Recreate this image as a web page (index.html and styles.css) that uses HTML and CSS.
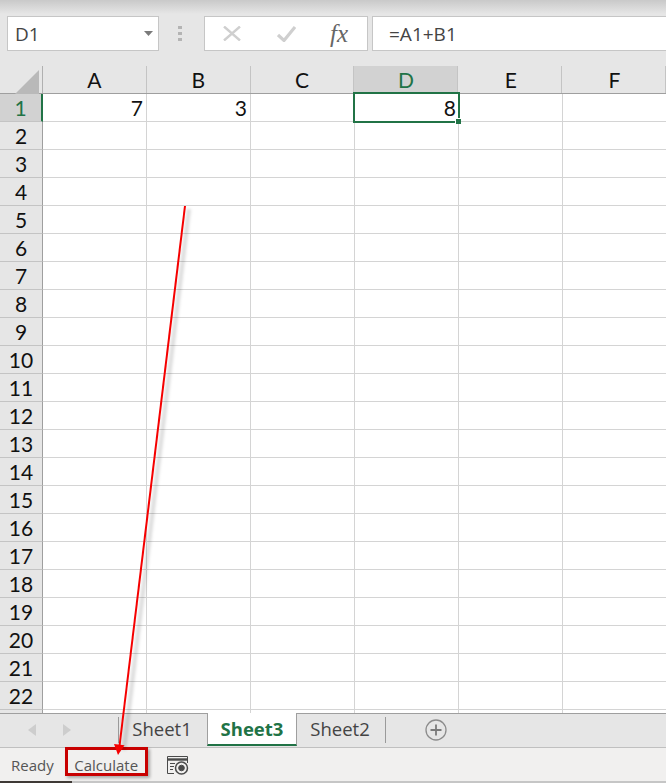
FILE: index.html
```html
<!DOCTYPE html>
<html lang="en">
<head>
    <meta charset="UTF-8">
    <title>Excel - Calculate</title>
    <link rel="stylesheet" href="styles.css">
</head>
<body>
    <div class="app">
        <div class="formula-bar">
            <div class="name-box">
                <span>D1</span>
                <svg class="name-caret" width="9" height="5" viewBox="0 0 9 5"><path d="M0 0h9L4.500 5z" fill="#7a7a7a"/></svg>
            </div>
            <div class="grip"><i></i><i></i><i></i></div>
            <div class="fx-box">
                <svg width="18" height="15" viewBox="0 0 18 15"><path d="M1 .500l16 14M17 .500l-16 14" stroke="#cfcfcf" stroke-width="2.400" fill="none"/></svg>
                <svg width="19" height="16" viewBox="0 0 19 16"><path d="M1 9l6 5.500L18 1" stroke="#cfcfcf" stroke-width="3.200" fill="none"/></svg>
                <span class="fx">fx</span>
            </div>
            <div class="formula-input">=A1+B1</div>
        </div>

        <div class="sheet">
            <div class="col-heads">
                <div class="corner"><svg width="24" height="24" viewBox="0 0 24 24"><path d="M24 0v24H0z" fill="#b9b9b9"/></svg></div>
                <div class="col-head">A</div>
                <div class="col-head">B</div>
                <div class="col-head">C</div>
                <div class="col-head active">D</div>
                <div class="col-head">E</div>
                <div class="col-head">F</div>
            </div>
            <div class="row">
                <div class="row-head active">1</div>
                <div class="cells">
                    <div class="cell">7</div>
                    <div class="cell">3</div>
                    <div class="cell"></div>
                    <div class="cell selected">8<span class="fill-handle"></span></div>
                </div>
            </div>
            <div class="row"><div class="row-head">2</div><div class="cells"></div></div>
            <div class="row"><div class="row-head">3</div><div class="cells"></div></div>
            <div class="row"><div class="row-head">4</div><div class="cells"></div></div>
            <div class="row"><div class="row-head">5</div><div class="cells"></div></div>
            <div class="row"><div class="row-head">6</div><div class="cells"></div></div>
            <div class="row"><div class="row-head">7</div><div class="cells"></div></div>
            <div class="row"><div class="row-head">8</div><div class="cells"></div></div>
            <div class="row"><div class="row-head">9</div><div class="cells"></div></div>
            <div class="row"><div class="row-head">10</div><div class="cells"></div></div>
            <div class="row"><div class="row-head">11</div><div class="cells"></div></div>
            <div class="row"><div class="row-head">12</div><div class="cells"></div></div>
            <div class="row"><div class="row-head">13</div><div class="cells"></div></div>
            <div class="row"><div class="row-head">14</div><div class="cells"></div></div>
            <div class="row"><div class="row-head">15</div><div class="cells"></div></div>
            <div class="row"><div class="row-head">16</div><div class="cells"></div></div>
            <div class="row"><div class="row-head">17</div><div class="cells"></div></div>
            <div class="row"><div class="row-head">18</div><div class="cells"></div></div>
            <div class="row"><div class="row-head">19</div><div class="cells"></div></div>
            <div class="row"><div class="row-head">20</div><div class="cells"></div></div>
            <div class="row"><div class="row-head">21</div><div class="cells"></div></div>
            <div class="row"><div class="row-head">22</div><div class="cells"></div></div>
            <div class="row row-cut"><div class="row-head"></div><div class="cells"></div></div>
        </div>

        <div class="tab-bar">
            <div class="tab-nav">
                <svg width="8" height="12" viewBox="0 0 8 12"><path d="M8 0v12L0 6z" fill="#cdcdcd"/></svg>
                <svg width="8" height="12" viewBox="0 0 8 12"><path d="M0 0v12l8-6z" fill="#cdcdcd"/></svg>
            </div>
            <div class="tab-sep"></div>
            <div class="tab">Sheet1</div>
            <div class="tab current">Sheet3</div>
            <div class="tab">Sheet2</div>
            <div class="tab-sep"></div>
            <svg class="add-sheet" width="22" height="22" viewBox="0 0 22 22">
                <circle cx="11" cy="11" r="10" stroke="#8c8c8c" stroke-width="1.300" fill="none"/>
                <path d="M11 5.500v11M5.500 11h11" stroke="#7a7a7a" stroke-width="1.800" fill="none"/>
            </svg>
        </div>

        <div class="status-bar">
            <span class="status-ready">Ready</span>
            <span class="status-calc">Calculate</span>
            <svg class="status-icon" width="23" height="20" viewBox="0 0 23 20" fill="none" stroke="#4a4a4a">
                <path d="M8 18.500H1.500v-17h20V8"/>
                <path d="M1.500 4.500h20" stroke-width="2.400"/>
                <path d="M4 8.500h5M4 11.500h4M4 14.500h3"/>
                <circle cx="15.500" cy="13" r="6" stroke-width="1.500"/>
                <circle cx="15.500" cy="13" r="2.800" fill="#4a4a4a"/>
            </svg>
        </div>
        <div class="window-edge"><div class="window-edge-dark"></div></div>

        <svg class="arrow" width="666" height="783" viewBox="0 0 666 783">
            <defs>
                <filter id="arrow-blur" x="-50%" y="-5%" width="200%" height="110%"><feGaussianBlur stdDeviation="1.500"/></filter>
            </defs>
            <path d="M189 209L124 750" stroke="#000" stroke-opacity=".14" stroke-width="4" fill="none" filter="url(#arrow-blur)"/>
            <path d="M185 206L119.500 746" stroke="#f50000" stroke-width="2" fill="none"/>
            <path d="M114 744l10.500 1.300L118 755z" fill="#f50000"/>
        </svg>
    </div>
</body>
</html>
```

FILE: styles.css
```css
* {
    box-sizing: border-box;
}
body {
    margin: 0;
    background-color: #e6e6e6;
    font-family: Lato, "Liberation Sans", sans-serif;
}
.app {
    position: relative;
    width: 666px;
    height: 783px;
    overflow: hidden;
    display: flex;
    flex-direction: column;
}

/* formula bar */
.formula-bar {
    height: 66px;
    padding: 16px 0 0 7px;
    display: flex;
    align-items: flex-start;
    background: linear-gradient(#c9c9c9, #e6e6e6 14px);
}
.name-box, .fx-box, .formula-input {
    height: 35px;
    background-color: #fff;
    border: 1px solid #c6c6c6;
    color: #444;
    font-family: "Open Sans", sans-serif;
    font-size: 19px;
    display: flex;
    align-items: center;
}
.name-box {
    width: 152px;
    padding: 0 5px 0 7px;
    justify-content: space-between;
}
.name-caret {
    margin-top: -1px;
}
.grip {
    width: 45px;
    height: 35px;
    padding-right: 3px;
    display: flex;
    flex-direction: column;
    align-items: center;
    justify-content: center;
    gap: 3px;
}
.grip i {
    width: 4px;
    height: 3px;
    background-color: #b4b4b4;
}
.fx-box {
    width: 164px;
    padding-left: 18px;
    gap: 36px;
}
.fx {
    margin-left: -2px;
    font-family: "Liberation Serif", serif;
    font-style: italic;
    font-size: 25px;
    color: #666;
}
.formula-input {
    flex: 1;
    margin-left: 4px;
    padding-left: 16px;
    border-right: none;
}

/* grid */
.sheet {
    height: 648px;
    background-color: #fff;
    overflow: hidden;
}
.col-heads {
    height: 28px;
    display: flex;
    background-color: #e6e6e6;
    border-bottom: 1px solid #9f9f9f;
}
.corner {
    width: 43px;
    padding: 4px 3px 0 16px;
    border-right: 1px solid #b0b0b0;
    display: flex;
    align-items: flex-start;
    justify-content: flex-end;
}
.corner svg {
    flex: none;
}
.col-head {
    width: 104px;
    border-right: 1px solid #c4c4c4;
    font-size: 21px;
    line-height: 28px;
    text-align: center;
    color: #111;
}
.col-head:nth-child(n+6) {
    padding-left: 2px;
}
.col-head.active {
    background-color: #d2d2d2;
    color: #217346;
}
.row {
    height: 28px;
    display: flex;
    border-bottom: 1px solid #d4d4d4;
}
.row-head {
    width: 43px;
    background-color: #e6e6e6;
    border-right: 1px solid #9f9f9f;
    border-bottom: 1px solid #c4c4c4;
    margin-bottom: -1px;
    font-size: 21px;
    line-height: 27px;
    text-align: center;
    color: #111;
}
.row-head.active {
    background-color: #d2d2d2;
    color: #217346;
    border-right: 2px solid #217346;
}
.cells {
    flex: 1;
    display: flex;
    background-image: linear-gradient(to right, transparent 103px, #d4d4d4 103px);
    background-size: 104px 100%;
}
.cell {
    position: relative;
    width: 104px;
    padding-right: 4px;
    font-size: 21px;
    line-height: 27px;
    text-align: right;
    color: #111;
}
.cell.selected {
    margin: -2px 0 -1px -2px;
    width: 107px;
    height: 31px;
    padding-right: 2px;
    border: 2px solid #217346;
    line-height: 27px;
    background-color: #fff;
}
.fill-handle {
    position: absolute;
    right: -3px;
    bottom: -3px;
    width: 5px;
    height: 5px;
    background-color: #217346;
    border: 1px solid #fff;
    border-right: none;
    border-bottom: none;
    box-sizing: content-box;
}

/* sheet tabs */
.tab-bar {
    height: 35px;
    display: flex;
    align-items: flex-start;
    background-color: #e6e6e6;
    border-top: 1px solid #9f9f9f;
    border-bottom: 1px solid #c0c0c0;
}
.tab-nav {
    width: 118px;
    height: 32px;
    padding-left: 28px;
    display: flex;
    align-items: center;
    gap: 27px;
}
.tab-sep {
    width: 1px;
    height: 26px;
    margin-top: 3px;
    background-color: #9a9a9a;
}
.tab {
    width: 88px;
    height: 32px;
    padding-right: 2px;
    font-family: "Open Sans", sans-serif;
    font-size: 18.500px;
    line-height: 30px;
    text-align: center;
    color: #444;
}
.tab.current {
    position: relative;
    width: 90px;
    height: 33px;
    margin-top: -1px;
    padding-right: 0;
    background-color: #fff;
    border-left: 1px solid #9f9f9f;
    border-right: 1px solid #9f9f9f;
    border-bottom: 2px solid #217346;
    font-weight: bold;
    line-height: 32px;
    color: #217346;
}
.add-sheet {
    margin: 5px 0 0 39px;
}

/* status bar */
.status-bar {
    height: 33px;
    display: flex;
    align-items: center;
    background-color: #f1f0ef;
    color: #555;
    font-family: "Open Sans", sans-serif;
    font-size: 15px;
}
.status-ready {
    margin-left: 11px;
}
.status-calc {
    position: relative;
    align-self: flex-start;
    width: 83px;
    height: 29px;
    margin: -1px 0 0 11px;
    padding-top: 3px;
    border: 3px solid #c80000;
    box-shadow: 2px 2px 3px rgba(0, 0, 0, .3);
    text-align: center;
    line-height: 24px;
}
.status-icon {
    margin-left: 18px;
}
.window-edge {
    height: 2px;
    background-color: #c6c6c6;
}
.window-edge-dark {
    width: 72px;
    height: 2px;
    background-color: #3f3a36;
}

/* annotation drawn over the sheet */
.arrow {
    position: absolute;
    left: 0;
    top: 0;
    pointer-events: none;
}
```
